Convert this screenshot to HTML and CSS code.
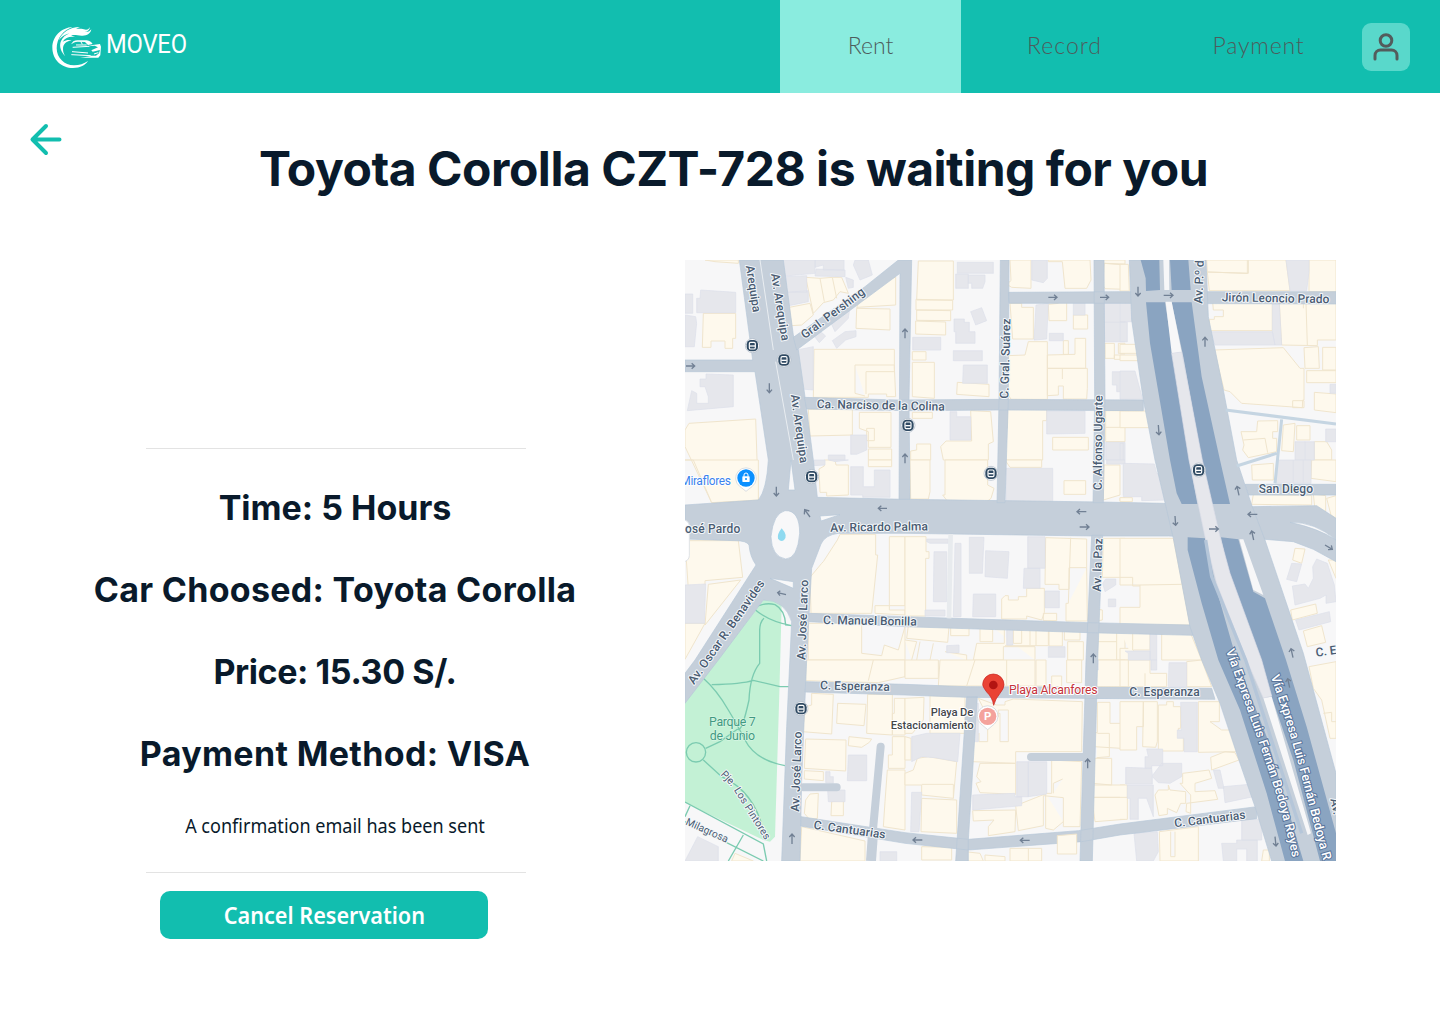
FILE: index.html
```html
<!DOCTYPE html>
<html lang="en">
<head>
<meta charset="utf-8">
<title>Moveo – Reservation</title>
<link rel="stylesheet" href="styles.css">
</head>
<body>
<header class="topbar">
  <a class="brand" aria-label="Moveo">
    <svg class="logo" viewBox="0 0 150 130" width="50" height="43.3">
      <path fill="#fff" d="M62 3C28 5 1 31 1 65c0 36 28 61 62 61 22 0 37-9 45-21-12 8-26 13-42 13-29 0-52-22-52-51C14 37 33 13 62 3z"/>
      <path fill="#fff" d="M20 43C31 20 51 3 84 3L72 8c12 0 22 0 30 3 7 0 10-4 12-9 0 9-7 14-15 16 9 1 15-3 19-8-2 13-14 20-29 19-13-1-22-4-32-1l15 6c-16-4-32 0-40 13 10-5 18-6 27-4-18 3-26 13-26 26 0 8 2 15 7 22C28 79 20 62 27 45c5-11 14-18 25-23-15 4-24 11-32 21z"/>
      <path fill="#fff" d="M64 46q6-3 12-3h28c9 1 14 5 18 11l-14 3-9-9-22-1c-8 0-14 4-20 8zM122 57l22-3 3 8-2 26-6 7H84l34-4-40-2h54l9-7 3-10-22 5-4-4 20-9-10-5-20 2z"/>
      <path stroke="#fff" stroke-width="3" fill="none" d="M62 64l50-3M60 77l48 4M58 86l58 3M72 57h32M86 46l5 9M126 84l13-4"/>
    </svg>
    <span class="brand-name">MOVEO</span>
  </a>
  <nav class="nav">
    <a class="tab tab-active"><span>Rent</span></a>
    <a class="tab tab-record"><span>Record</span></a>
    <a class="tab tab-payment"><span>Payment</span></a>
    <a class="profile" aria-label="Profile">
      <svg width="48" height="48" viewBox="0 0 48 48" fill="none" stroke="#535c5c" stroke-width="3" stroke-linecap="round"><circle cx="24" cy="17.5" r="5.8"/><path d="M13 36v-3.500a5.500 5.500 0 0 1 5.500-5.500h11a5.500 5.500 0 0 1 5.500 5.500V36"/></svg>
    </a>
  </nav>
</header>
<main class="page">
  <div class="title-row">
    <a class="back" aria-label="Back"><svg width="34" height="34" viewBox="0 0 34 34" fill="none" stroke="#12beaf" stroke-width="4" stroke-linecap="round" stroke-linejoin="round"><path d="M30.500 17.500H3.500M17 4L3.500 17.500L17 31"/></svg></a>
    <h1>Toyota Corolla CZT-728 is waiting for you</h1>
  </div>
  <div class="content">
    <section class="summary">
      <div class="details">
        <p class="d-time">Time: 5 Hours</p>
        <p class="d-car">Car Choosed: Toyota Corolla</p>
        <p class="d-price">Price: 15.30 S/.</p>
        <p class="d-pay">Payment Method: VISA</p>
        <p class="note">A confirmation email has been sent</p>
      </div>
      <button class="cancel"><span>Cancel Reservation</span></button>
    </section>
    <svg class="map" viewBox="0 0 1953 1803" width="651" height="601">
      <rect width="1953" height="1803" fill="#f7f7f8"/>
      <g class="cream">
        <path d="M60 0H160V10L90 5zM55 160H152V235H143V265H120V243H78V262H52zM12 490L212 477L220 718L80 728L0 560V510zM362 52L405 55L442 52H470L490 100L465 95L445 120L415 128L385 160zM405 55L418 125M442 52L455 115M313 142L375 130L385 165L350 195L320 197zM535 100L632 50V135L515 142zM515 145L615 147V210L513 205zM387 268H628V320L632 410H605V402H550V412H385zM510 315H628V335M510 315V400L540 408M543 335H628M543 335V402M370 448H502V525L375 528zM523 457H618V562H550V515L523 505zM545 505H568V542H545zM550 567H620V600H550z"/>
        <g transform="translate(660 0)"><path d="M40 3H145V120H35zM33 118L143 121V150H33zM35 150L137 152V182L35 181zM32 183L122 186V225L32 222zM22 275H63V300H22zM22 307H88V415L22 410zM157 367L252 373V410L155 403zM315 0H378V85L320 82L305 73L318 62zM430 0H555L558 60L545 85H480L472 5H430zM598 10L660 15V88L600 86L593 75zM595 0H660V12L595 10zM315 130H350V142H385V237H323zM430 133L460 130V125H485V182H432zM505 165H548V207H505zM475 242H490V283H475zM427 285L510 283V235H542V325H427zM308 287L360 285L370 245H427V418H318L308 400zM427 325H547V385L545 417H475V378H460V405L427 407zM472 327V357M600 250H628V295H600zM640 250H660V280H640zM628 285H660V298H628zM22 457H82V475H22zM197 452L257 455L265 545L250 552V600H115L107 560L123 543H200zM17 573L35 570V552H77V600H17zM308 445L425 447V482H413V600H300V505H307zM443 532H550V570H443zM602 452H660V545H602zM602 502H660"/></g>
        <g transform="translate(1305 0)"><path d="M260 0H382V40L262 36zM262 36L385 40V0H498L510 92H268zM567 35V0H648V95H567zM0 13H25L28 93H0zM278 125H457V212H268V178H283V170H310V150H280zM478 130H648V240H592V257L485 255zM558 130L562 255M550 130V145M283 270L490 263L540 325H552V420H548L547 443L365 430L330 395L312 390zM552 263L595 260L598 325H555zM608 262H648V330H608zM560 332H648V368H560zM583 397L648 402V458L583 450zM518 422H552V443H518zM413 483L473 482V515H458V535H470V575L385 593L368 570L372 555L363 515H410zM370 540L435 535L443 578M490 495L525 490L520 575L485 572zM530 497H570V540H530zM583 545H620L635 570V600H583zM0 253H57V280H0zM0 285H57V302H0zM0 453H88L95 503H0z"/></g>
        <g transform="translate(0 600)"><path d="M0 0H220V120L80 128L25 0zM0 242H160L173 352L60 362V375L10 387zM70 373L167 360L60 495zM0 490H60L0 598zM402 27L418 18V0H450L453 15H490V105L425 108V97H405zM550 0H620V20H550zM465 223H572V285H578L560 460H378L375 352L410 310L415 305L457 240zM613 230H660V437H570V460L660 465V450H613zM370 490H530V580L590 587L598 555L640 570L660 500V600H370z"/></g>
        <g transform="translate(660 600)"><path d="M15 0H75V95L70 117H17zM120 0H248V75L267 85L258 115L243 127H130L113 105H120zM300 0H410V22H315zM477 62H542V103H477zM597 15H645V105L595 120zM645 113H660V123H645zM0 230H63V275H72V295H62V468H0zM422 233L545 237V323H492V388H462V373H420zM497 233L490 430M545 323L547 483H483V430H490M290 417L300 407H310V420H340V410H365V385H418V458L410 480L365 468V477H290zM415 460H455V482H415zM573 447L592 450V480L573 483zM595 235H660V352H592zM10 497L132 500L128 547L5 535zM137 502H192V527H137zM225 505L263 508V545H225zM270 508H298V550H215L205 600H295V560H390V600M325 510H350V550H325zM355 507H430V557H300M375 507V555M393 510V557M432 510H472V558H432zM478 513H525V540H478zM488 545H535V600H488zM575 515H660V600H575zM635 515V600M575 545H635M0 540L35 545L20 600M45 545L35 600M85 550L75 600M120 575L185 585V600"/></g>
        <g transform="translate(1305 600)"><path d="M395 15L460 10V60H397zM575 0H648V65L573 55zM400 103L575 107V135L395 133zM580 102L617 107V155L585 150zM620 115L648 107V175L633 165zM525 265L555 267L545 310L518 300zM512 450L587 432L592 460L517 480zM550 513L605 497L617 547L562 560zM0 235H160L210 495H0V442H60V375H0zM0 352H38V378H60M60 375L185 373M0 512H90V570H40V600H0V565H25M38 515V570M125 520H212L245 600H125zM0 113H37V125H0zM625 300H648V355z"/></g>
        <g transform="translate(0 1200)"><path d="M362 0H660V50L580 68L362 62zM565 0L550 62M380 100L445 103L440 222L352 215L362 140L380 135zM458 130L543 133L537 197L455 190zM548 103H622V225L545 220zM628 115H660V225H622V160H628zM362 237L483 240L482 333L358 325zM492 230L560 237L553 247L530 262L490 257zM358 332L415 335V362L358 357zM362 420L375 402L400 400L397 475L375 480L358 460zM440 425L475 422V467H438zM622 230H660V325H610V285H622zM607 330H660V510L595 500L600 425zM350 500L540 543V603H345zM140 603L150 580L205 603z"/></g>
        <g transform="translate(660 1200)"><path d="M0 0H100V55H0zM105 0H390V78H100zM210 0L185 78M305 0V78M393 0H423V78H393zM440 48H470V80H440zM485 0H530V68H485zM573 0H660V80H573zM0 115L57 112L55 180L22 220H0zM75 107L180 110V220H75zM220 115L275 135H300V125L325 117L532 125L530 275H332V310L202 305V245L222 220V245H248V170L285 160V245H310V150H280V170H248zM0 230L18 235V300H0zM37 295L70 290L155 305L145 415L50 405V375H0V340L25 330zM50 373H145V415M50 415L155 420V520L48 515zM225 310H332V403L225 398L213 370L228 365L215 350zM203 452L332 450L330 515L250 527V500L267 480L205 483zM332 437L425 400H440V300L530 305L525 500H475V413L415 407V497L340 512zM473 357L445 370V400M422 400V505L445 510L475 485M577 127H615V190H648V265L567 260V218H577zM577 220H613V290L575 293M570 295H620V375L562 370zM563 375H660V412H563zM560 412H660V478L570 485zM50 560L140 562V600H50zM180 603V575L225 580L235 603zM240 585L300 590V603H240zM315 565H410V603H315zM370 565V603"/></g>
        <g transform="translate(1305 1200)"><path d="M0 0H90V40H140V80H0zM25 0V80M75 40V80M200 5L245 0L275 80H200zM0 125H70V200H50V270H0zM70 125H112V245L107 262L68 260zM115 135H140V125H160V140H182V205H175V230H190V273H115zM235 125H298V185H270L305 210H330L350 275L235 277zM272 292L315 275L345 278L357 300L275 330zM188 340L267 330L275 355L225 370V395L285 392L293 418L200 430L198 455L212 460V405L180 370H188zM105 405L115 390H145V375L150 390L197 395V430H182L170 458L142 445V463L117 467zM0 375H22V478H0M0 412H25M118 515L235 500V603H120zM152 515V590H165V515M430 570H448V603H425zM567 20L648 5V235H630L605 120L580 85zM610 160L635 157V185H648"/></g>
      </g>
      <g class="grey">
        <path d="M0 102H23V160H0zM47 90L152 97V158H35V115H45zM0 165L32 170L35 190L28 260H0zM63 342L145 345V440L7 452L20 392L35 400V430H70V410L60 380H45V357H63zM275 0H390V40L300 48L295 15zM393 27L480 30V50L390 48zM390 0H477V30H415V15L390 22zM302 50L365 47V97H305zM305 97L370 92V125L312 137zM505 15L510 0H550L562 45L525 60zM482 52L505 60V82L490 85zM430 172L495 140L490 175L450 215zM385 225L405 213L422 228L403 248zM442 242L480 215L513 212V230L482 240L455 265zM335 270L385 260V390L350 387zM497 525H545V570L515 583H497zM430 585H480V600H430z"/>
        <g transform="translate(660 0)"><path d="M157 7H265V40H157zM152 42H190V85H152zM190 45H240V65L233 85H200V70H190zM197 155L230 143L245 182L212 195zM147 177H178V187H193V215H210V250H152V215H147zM23 232H107V270H23zM145 272H232V302H145zM175 315H247V370H173zM380 0H427V55L415 68L380 60zM393 135L430 130L425 237L387 240zM505 127H540V165H505zM433 220H475V242H433zM597 127H660V245H597zM597 187H660M622 335H660V395H635V375H622zM135 455H155V470H197V540H135zM425 453H540V520L425 522zM602 547H660V600H602z"/></g>
        <g transform="translate(1305 0)"><path d="M498 0H567V35L560 92H510zM457 133H478L485 255H465L457 213zM272 215H457L465 255H285zM0 125H35L37 185H0zM0 187H22V245H0zM0 333H45L68 418H0zM630 373H648V400H630zM617 507H648V545H617zM525 545H583V600H525zM555 545V600M0 550H10V600H0z"/></g>
        <g transform="translate(0 600)"><path d="M387 0H420V15L387 17zM433 0H490L450 5zM497 20H535V80H568V30H615V112H533V105H497zM0 375L62 372L58 490H0z"/></g>
        <g transform="translate(660 600)"><path d="M303 25H443V130H303zM65 237H130V250H75L65 245zM87 275H125V425H85zM150 250H168V470H145zM60 450H120V468H60zM193 232H237L232 340H193zM242 272L312 275L307 355L240 350zM205 402H272V470H203zM368 230H420V325H368zM357 325H405V385H355zM420 393H463V443H420zM602 357H632V375L600 395L593 370zM610 417H632V440H610zM305 505H323V555H305zM125 557L162 555V578H125zM430 560H480V592H430zM605 0H660V12H605zM655 15V105"/></g>
        <g transform="translate(1305 600)"><path d="M10 10L103 12L110 40L123 43L137 120L65 122V110H10zM475 0H573V70H467zM520 0V70M550 0V70M515 310L545 312L530 365L500 358zM590 297L622 310L643 375L648 425L618 430V405L600 415L525 435L517 378L555 372L565 385L580 355L578 320zM527 480L628 455L632 485L537 510zM90 520H110V600H90zM15 573H90V600H25V580z"/></g>
        <g transform="translate(0 1200)"><path d="M38 530L100 560V603H0zM490 285H545V362H487zM422 335H435V350H445V370L422 368zM428 390H480V425H430zM585 575H635V603H585z"/></g>
        <g transform="translate(660 1200)"><path d="M20 230L65 220H165L158 305L90 293L50 290L20 305zM203 130H220V245H203zM335 305H370V410H335zM370 305H425V402L370 410zM203 405L330 400V410H350V437L203 450zM20 397H50L42 515H17zM560 0H580V30H560z"/></g>
        <g transform="translate(1305 1200)"><path d="M147 8H200V80H145zM93 0H110V30H93zM182 127H232V275H192V235H172V210H185zM80 267H128V317H95V325H75V290H85zM17 322L95 325L97 347L125 310H185V350L150 370L115 368L97 350V372H17zM22 375H100V470L80 415H55V478H30V415H22zM280 330H300L312 385H295zM310 380L388 373L400 410L315 428zM365 478H425V540H365zM305 550H350V540H412V603H380V567H350V603H310zM42 520L112 515L115 575L100 603H50z"/></g>
      </g>
      <path fill="#c3f1d5" d="M235 1020L262 1018L290 1035L283 1300L270 1730L255 1745L235 1740L0 1628V1325z"/>
      <g fill="none" stroke="#7bcbb0" stroke-width="4">
        <path d="M205 1045Q240 1025 270 1034Q300 1050 302 1095L320 1097M205 1045Q250 1085 320 1097M237 1075Q225 1085 224 1110V1210Q195 1245 192 1320Q170 1420 158 1407M55 1255Q95 1290 130 1350Q160 1400 180 1440Q210 1500 300 1517M80 1274Q170 1272 205 1261L285 1280H312M158 1407L105 1445L62 1465M55 1500L110 1550Q220 1600 240 1740M0 1626L235 1752L245 1803M15 1637L0 1670M175 1725L130 1803M0 1685L235 1803"/><circle cx="33" cy="1477" r="29"/>
      </g>
      <g fill="#c5cfda" stroke="#b7c7d8" stroke-width="2">
        <path d="M163 0H295L325 225L340 270L360 410L385 600L397 712L660 718L1250 726L1435 730L1485 735H1645L1700 740L1895 737L1953 775V905L1885 868L1825 845L1740 838L1450 828L1220 828L660 820H460Q420 825 408 852L380 925L373 1050L365 1200L350 1560L345 1803H290L305 1400L320 1085Q300 1020 235 1020L100 1200L0 1330V1240L30 1200L213 915Q195 890 192 855Q185 842 150 842L0 837V735L220 720Q245 690 250 600L210 335H0V300H203Z"/>
        <path d="M325 232L540 80L640 0H680L672 420L675 718H642L645 40L335 270zM358 412L640 420L940 418L1375 420V452L940 450L675 452L365 447zM946 0H972L970 420L960 728H936L942 420zM970 97L1305 95H1953V132L1305 130H972zM1227 0H1257L1260 420L1255 728H1224L1229 420z"/>
        <path d="M373 1060L660 1070L1210 1088L1515 1095L1525 1126L1210 1118L660 1100L373 1085zM1220 826H1253L1238 1200L1222 1803H1185L1203 1200zM362 1265L660 1273L845 1280L1305 1282L1580 1285L1590 1318L1305 1316L845 1312L660 1305L360 1296zM845 1310H877L850 1740V1803H812zM348 1670L400 1678L660 1718L850 1738L1180 1712L1305 1692L1715 1640V1676L1305 1725L1190 1745L850 1770L660 1750L347 1698zM1680 673H1953V705H1690z"/>
        <path d="M1333 0H1563L1570 170L1615 390L1655 600L1700 735L1740 840L1855 1180L1953 1540V1803H1760L1710 1640L1665 1510L1605 1330L1550 1200L1515 1100L1465 835L1410 600L1375 420L1340 180z"/>
      </g>
      <path fill="#fef9ed" stroke="#f0e5cd" stroke-width="3" d="M1117 1727L1175 1722V1782H1117z"/>
      <path fill="none" stroke="#c5d5e2" stroke-width="9" d="M1622 450L1953 492M1790 478L1770 670M1655 618L1775 580"/>
      <path fill="none" stroke="#c5cfda" stroke-width="24" stroke-linecap="round" d="M587 1460L562 1730M355 1582H455M1038 1491H1200"/>
      <path fill="none" stroke="#c5cfda" stroke-width="30" d="M564 1720L558 1803"/>
      <path fill="none" stroke="#e8ebee" stroke-width="14" d="M797 822L792 1075"/>
      <g fill="#8aa4c1">
        <path d="M1367 0H1423L1425 90L1383 93L1382 55zM1455 0H1510L1517 90H1460zM1383 127H1440L1465 285L1513 600L1537 732H1490L1475 700L1455 600L1395 250zM1460 127H1520L1550 350L1605 600L1635 732H1575L1550 600L1495 290zM1508 832L1560 835L1595 990L1655 1200L1745 1430L1855 1803H1800L1745 1600L1665 1350L1600 1200L1550 1030L1508 870zM1608 832L1660 838L1705 995L1740 1015L1803 1200L1865 1400L1953 1720V1803H1905L1825 1500L1760 1310L1725 1200L1635 960z"/>
      </g>
      <path fill="#f7f7f8" d="M1435 0H1452L1453 90H1438zM1442 125H1460L1490 277L1460 280zM1735 1314L1760 1310L1878 1720L1868 1725zM1663 838H1675L1735 1005L1705 990z"/>
      <path fill="#e6e7ec" stroke="#dcdee9" stroke-width="2" d="M1460 280L1490 276L1552 600L1605 830L1635 940L1730 1200L1760 1308L1735 1314L1685 1200L1595 970L1560 830L1512 600z"/>
      <path fill="none" stroke="#b5c6d9" stroke-width="10" d="M1562 840L1580 950L1682 1200L1850 1720"/>
      <path fill="#f8f8f9" stroke="#b7c7d8" stroke-width="2" d="M300 752Q344 750 344 820Q338 896 302 897Q260 890 258 830Q265 760 300 752zM255 955L325 965V985zM310 690L318 600L330 690zM405 768L465 764L408 783zM1815 787Q1890 785 1953 840Q1900 805 1815 787z"/>
      <path fill="none" stroke="#e9edf1" stroke-width="3" d="M225 0L265 270M272 305L325 600"/>
      <path fill="#8fdaf0" d="M290 805Q310 827 297 840Q288 847 279 836Q276 822 290 805z"/>
      <rect x="-30" y="780" width="43" height="125" rx="18" fill="#fff" stroke="#dfe2e6" stroke-width="3"/>
      <g class="arrows">
        <path d="M3 318h26m-9-8l9 8-9 8M253 370v28m-8-9l8 9 8-9M274 680v28m-8-9l8 9 8-9M375 771l-16-22m-1 14l1-14 14 4M606 745h-26m9-8l-9 8 9 8M303 1004l-25-6m8-6l-8 6 7 9M321 1752v-30m-8 9l8-9 8 9M1090 112h26m-9-8l9 8-9 8M1245 112h26m-9-8l9 8-9 8M1204 755h-28m9-8l-9 8 9 8M1184 801h28m-9-8l9 8-9 8M660 235v-28m-8 9l8-9 8 9M660 610v-28m-8 9l8-9 8 9M1225 1210v-28m-8 9l8-9 8 9M1208 1525v-28m-8 9l8-9 8 9M712 1740h-28m9-8l-9 8 9 8M1034 1741h-28m9-8l-9 8 9 8M1359 80v28m-8-9l8 9 8-9M1436 106h28m-9-8l9 8-9 8M1560 260v-28m-8 9l8-9 8 9M1420 495l2 29m-9-8l9 8 7-9M1470 768l2 28m-9-8l9 8 7-9M1662 706l-6-27m-6 10l6-10 10 7M1717 763h-28m9-8l-9 8 9 8M1572 807h28m-9-8l9 8-9 8M1706 840l-6-27m-6 10l6-10 10 7M1920 855l22 13m-3-12l3 12-13 1M1824 1193l-6-27m-6 10l6-10 10 7M1814 1283l-6-27m-6 10l6-10 10 7M1770 1730l3 28m-9-8l9 8 7-9"/>
      </g>
      <defs>
        <g id="stop"><circle r="21" fill="#fff" stroke="#aab6c4" stroke-width="2"/><rect x="-17" y="-17" width="34" height="34" rx="13" fill="#2f4a63"/><rect x="-9" y="-10" width="18" height="20" rx="4" fill="none" stroke="#fff" stroke-width="3.500"/><path d="M-8 1H8" stroke="#fff" stroke-width="4"/></g>
        <path id="expresa-w" d="M1622 1172Q1690 1355 1750 1530T1842 1900"/>
        <path id="expresa-e" d="M1757 1250Q1815 1410 1860 1590T1970 2000"/>
      </defs>
      <use href="#stop" x="202" y="257"/><use href="#stop" x="297" y="300"/><use href="#stop" x="669" y="496"/><use href="#stop" x="380" y="650"/><use href="#stop" x="918" y="640"/><use href="#stop" x="1541" y="630"/><use href="#stop" x="348" y="1346"/>
      <g class="street">
        <text transform="translate(176 -12) rotate(81)">.</text>
        <text transform="translate(182 18) rotate(81)" textLength="142">Arequipa</text>
        <text transform="translate(258 42) rotate(81)" textLength="204">Av. Arequipa</text>
        <text transform="translate(317 405) rotate(82)" textLength="207">Av. Arequipa</text>
        <text transform="translate(359 238) rotate(-37)" textLength="229">Gral. Pershing</text>
        <text transform="translate(395 444) rotate(1.200)" textLength="384">Ca. Narciso de la Colina</text>
        <text transform="translate(970 416) rotate(-88.500)" textLength="240">C. Gral. Suárez</text>
        <text transform="translate(1250 691) rotate(-89.500)" textLength="285">C. Alfonso Ugarte</text>
        <text transform="translate(1552 131) rotate(-88)">Av. P.º d</text>
        <text transform="translate(1610 124) rotate(1)" textLength="323">Jirón Leoncio Prado</text>
        <text transform="translate(1721 698)" textLength="163">San Diego</text>
        <text transform="translate(0 820)" textLength="166">osé Pardo</text>
        <text transform="translate(436 815) rotate(-.8)" textLength="293">Av. Ricardo Palma</text>
        <text transform="translate(1247 995) rotate(-88)" textLength="160">Av. la Paz</text>
        <text transform="translate(414 1092) rotate(1)" textLength="281">C. Manuel Bonilla</text>
        <text transform="translate(361 1200) rotate(-88)" textLength="240">Av. José Larco</text>
        <text transform="translate(342 1655) rotate(-88)" textLength="240">Av. José Larco</text>
        <text transform="translate(27 1275) rotate(-55)" textLength="372">Av. Oscar R. Benavides</text>
        <text transform="translate(405 1288) rotate(1.200)" textLength="209">C. Esperanza</text>
        <text transform="translate(1333 1309)" textLength="211">C. Esperanza</text>
        <text transform="translate(385 1706) rotate(8)" textLength="217">C. Cantuarias</text>
        <text transform="translate(1469 1702) rotate(-7)" textLength="215">C. Cantuarias</text>
        <text transform="translate(1894 1190) rotate(-8)">C. E</text>
        <text transform="translate(1936 1618) rotate(78)">Av.</text>
        <text class="thin" transform="translate(0 1693) rotate(24)" textLength="136">Milagrosa</text>
        <text class="thin" transform="translate(106 1544) rotate(47)" textLength="50">Pje.</text>
        <text class="thin" transform="translate(146 1590) rotate(58)" textLength="178">Los Pintores</text>
      </g>
      <g class="highway"><text><textPath href="#expresa-w">Vía Expresa Luis Fernán Bedoya Reyes</textPath></text><text><textPath href="#expresa-e">Vía Expresa Luis Fernán Bedoya R</textPath></text></g>
      <g class="park"><text x="72" y="1398" textLength="140">Parque 7</text><text x="74" y="1439" textLength="136">de Junio</text></g>
      <text class="poi-blue" x="-14" y="674" textLength="152">Miraflores</text>
      <path d="M183 694L164 679A31 31 0 1 1 202 679z" fill="#fff" stroke="#c9ced4" stroke-width="2"/><circle cx="183" cy="654" r="26" fill="#0b90ff"/><rect x="172" y="649" width="22" height="17" rx="2" fill="#fff"/><path d="M177 650v-5a6 6 0 0 1 12 0v5" fill="none" stroke="#fff" stroke-width="3"/><circle cx="183" cy="657" r="3" fill="#0b90ff"/>
      <g class="poi-dark"><text x="737" y="1367" textLength="128">Playa De</text><text x="617" y="1407" textLength="249">Estacionamiento</text></g>
      <path d="M908 1409L888 1392A31 31 0 1 1 928 1392z" fill="#fff" stroke="#c9ced4" stroke-width="2"/><circle cx="908" cy="1369" r="26" fill="#f4a29c"/><text class="parking" x="908" y="1381">P</text>
      <path d="M926 1336Q922 1312 905 1296Q893 1280 893 1274A32 32 0 0 1 957 1274Q957 1285 945 1300Q931 1316 926 1336z" fill="#ea4335" stroke="#c5221f" stroke-width="2"/><circle cx="925" cy="1275" r="13" fill="#b31412"/>
      <text class="poi-red" x="972" y="1301" textLength="266">Playa Alcanfores</text>
    </svg>
  </div>
</main>
</body>
</html>
```
FILE: styles.css
```css
* { box-sizing: border-box; }
body { margin: 0; background: #fff; color: #091a2b; font-family: "Inter", sans-serif; }
.topbar { height: 93px; background: #12beaf; display: flex; justify-content: space-between; align-items: center; padding-left: 52px; }
.brand { display: flex; align-items: center; gap: 4px; color: #fff; padding-top: 2px; }
.logo { display: block; }
.brand-name { font: 400 25px/28px "Roboto", sans-serif; letter-spacing: -.2px; margin-top: -4px; transform: scaleX(.95); transform-origin: left; }
.nav { display: flex; align-items: center; width: 660px; height: 93px; font: 300 23px/30px "Lato", sans-serif; color: #4d5c5c; }
.tab { display: flex; align-items: center; justify-content: center; height: 93px; padding-bottom: 3px; }
.tab-active { width: 181px; background: #8aecdf; }
.tab-record { width: 207px; letter-spacing: 1px; }
.tab-payment { width: 181px; letter-spacing: .8px; }
.profile { margin-left: 13px; width: 48px; height: 48px; border-radius: 9px; background: #59d8cb; }
.profile svg { display: block; }
.page { padding-top: 29px; }
.title-row { display: flex; height: 138px; }
.back { width: 34px; margin-left: 29px; }
h1 { margin: 17px 0 0 196px; font-size: 48px; line-height: 60px; font-weight: 650; letter-spacing: -.48px; white-space: nowrap; }
.content { display: flex; align-items: flex-start; }
.summary { width: 685px; padding: 188px 0 0 85px; }
.details { width: 500px; text-align: center; display: flex; flex-direction: column; align-items: center; }
.details::before, .details::after { content: ""; width: 380px; height: 1px; background: #e3e3e3; margin-left: 1px; }
.details p { margin: 0; white-space: nowrap; font-size: 34px; line-height: 46px; font-weight: 650; padding-top: 36px; }
.details .d-car { letter-spacing: .3px; }
.details .d-price { letter-spacing: -.4px; }
.details .d-pay { letter-spacing: .35px; }
.details .note { font: 400 19.5px/26px "Noto Sans", sans-serif; padding: 36px 0 33px; transform: scaleX(.925); }
.cancel { display: flex; align-items: center; justify-content: center; margin: 18px 0 0 75px; width: 328px; height: 48px; border: 0; border-radius: 10px; background: #12beaf; color: #fff; font: 600 23.5px/48px "Noto Sans", sans-serif; padding: 0; }
.cancel span { transform: scaleX(.92); }
.map { display: block; }
.cream path { fill: #fef9ed; stroke: #f0e5cd; stroke-width: 3; }
.grey path { fill: #e6e7ec; stroke: #dcdfea; stroke-width: 2; }
.arrows path { fill: none; stroke: #718094; stroke-width: 4; }
.street text { font: 500 36px "Roboto", sans-serif; fill: #4a5c72; stroke: #f4f7fa; stroke-width: 6px; stroke-linejoin: round; paint-order: stroke; }
.street .thin { font-size: 31px; font-weight: 400; }
.highway text { font: 500 38px "Roboto", sans-serif; fill: #fff; stroke: #58749b; stroke-width: 6px; paint-order: stroke; }
.park text { font: 400 37px "Roboto", sans-serif; fill: #419981; stroke: #dff8e9; stroke-width: 3px; paint-order: stroke; }
.poi-blue { font: 400 36px "Roboto", sans-serif; fill: #3b82ed; stroke: #fff; stroke-width: 5px; paint-order: stroke; }
.poi-dark text { font: 500 34px "Roboto", sans-serif; fill: #45474c; stroke: #fff; stroke-width: 6px; paint-order: stroke; }
.poi-red { font: 400 37px "Roboto", sans-serif; fill: #c5333a; stroke: #fff; stroke-width: 6px; paint-order: stroke; }
.parking { font: 700 34px "Roboto", sans-serif; fill: #fff; text-anchor: middle; }
```
